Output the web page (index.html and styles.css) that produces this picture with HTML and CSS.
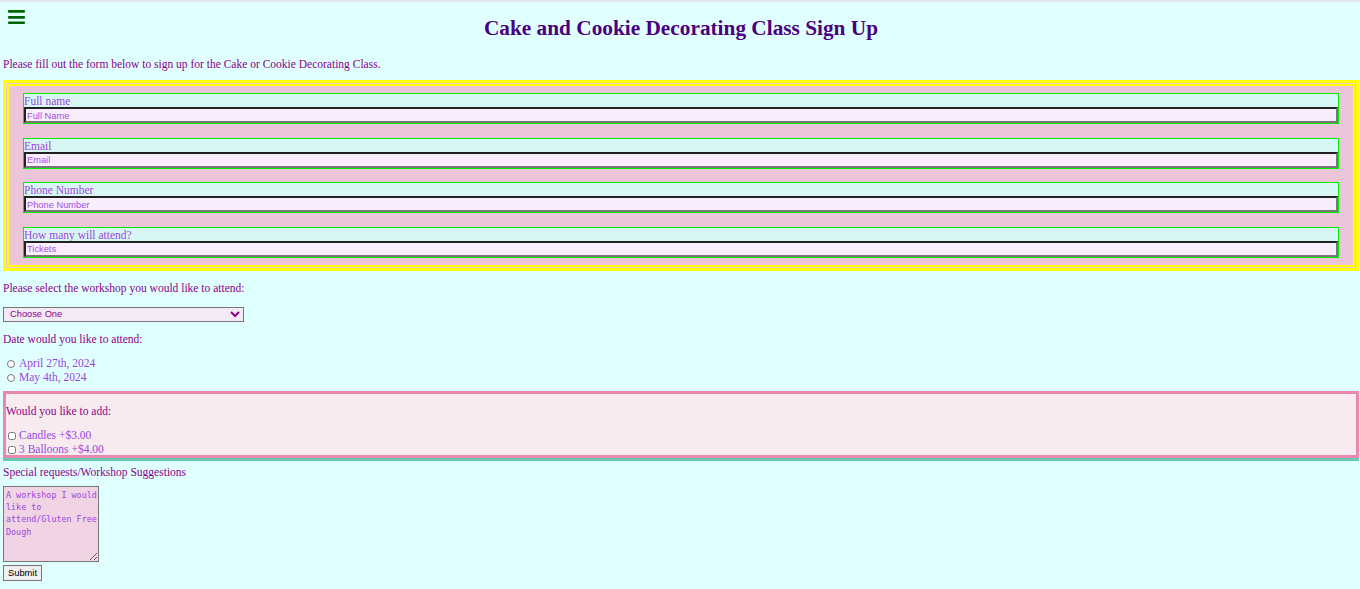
FILE: index.html
```html
<!DOCTYPE html>
<html lang="en">
<head>
<meta charset="utf-8">
<title>Cake and Cookie Decorating Class Sign Up</title>
<link rel="stylesheet" href="styles.css">
</head>
<body>
<header class="top">
  <div class="menu" aria-label="Menu">
    <svg width="17" height="15" viewBox="0 0 17 15">
      <rect x="0" y="0" width="17" height="2.7" rx="1" fill="#006400"/>
      <rect x="0" y="6" width="17" height="2.7" rx="1" fill="#006400"/>
      <rect x="0" y="11.4" width="17" height="2.7" rx="1" fill="#006400"/>
    </svg>
  </div>
  <h1 class="title">Cake and Cookie Decorating Class Sign Up</h1>
  <div></div>
</header>

<p class="intro">Please fill out the form below to sign up for the Cake or Cookie Decorating Class.</p>

<form class="form">
  <fieldset class="contact">
    <div class="group">
      <label class="group-label" for="name">Full name</label>
      <input class="field" id="name" type="text" placeholder="Full Name">
    </div>
    <div class="group">
      <label class="group-label" for="email">Email</label>
      <input class="field" id="email" type="email" placeholder="Email">
    </div>
    <div class="group">
      <label class="group-label" for="phone">Phone Number</label>
      <input class="field" id="phone" type="tel" placeholder="Phone Number">
    </div>
    <div class="group">
      <label class="group-label" for="tickets">How many will attend?</label>
      <input class="field" id="tickets" type="text" placeholder="Tickets">
    </div>
  </fieldset>

  <p class="text select-label">Please select the workshop you would like to attend:</p>
  <select class="workshop">
    <option>Choose One</option>
    <option>Cake Decorating</option>
    <option>Cookie Decorating</option>
  </select>

  <p class="text date-label">Date would you like to attend:</p>
  <div class="options">
    <label class="option"><input class="radio" type="radio" name="date"> April 27th, 2024</label>
    <label class="option"><input class="radio" type="radio" name="date"> May 4th, 2024</label>
  </div>

  <div class="addons">
    <p class="text addons-label">Would you like to add:</p>
    <label class="option check-row"><input class="check" type="checkbox">Candles +$3.00</label>
    <label class="option check-row"><input class="check" type="checkbox">3 Balloons +$4.00</label>
  </div>

  <p class="text special-label">Special requests/Workshop Suggestions</p>
  <textarea class="requests" placeholder="A workshop I would like to attend/Gluten Free Dough"></textarea>
  <div class="actions"><button class="submit" type="submit">Submit</button></div>
</form>
</body>
</html>
```

FILE: styles.css
```css
html, body {
  margin: 0;
  padding: 0;
}

body {
  background: #e0ffff;
  border-top: 2px solid #e2e6ea;
  padding: 0 1px 0 3px;
  font-family: "Liberation Serif", "Times New Roman", serif;
  font-size: 11.5px;
  line-height: 13px;
  color: #8b008b;
}

.top {
  display: grid;
  grid-template-columns: 1fr auto 1fr;
  align-items: start;
  padding-top: 8px;
  height: 33px;
}

.menu {
  padding-left: 5px;
  height: 15px;
}

.menu svg {
  display: block;
}

.title {
  margin: 5px 0 0;
  font-size: 21.3px;
  line-height: 26px;
  font-weight: bold;
  color: #4b0082;
  text-align: center;
}

.intro {
  margin: 14px 0 0;
  padding-top: 1px;
  line-height: 13px;
}

.form {
  margin: 0;
}

.contact {
  margin: 9px 0 0;
  padding: 10px 17px 10px 17px;
  border: 3px solid #ffff00;
  box-shadow: inset 0 0 0 1px #edc5d8, inset 0 0 0 3px #ffff00;
  background: #edc5d8;
  display: flex;
  flex-direction: column;
  gap: 13.6px;
  min-width: 0;
}

.group {
  display: flex;
  flex-direction: column;
  border: 1px solid #00ee00;
  background: #d8f7f4;
}

.group-label {
  color: #9b45e0;
  padding-top: 1px;
  line-height: 12px;
}

.field {
  margin: 0;
  height: 16px;
  box-sizing: border-box;
  padding: 1px 1px 0;
  border-style: solid;
  border-width: 2px;
  border-color: #222 #777 #777 #222;
  background: #f9eefb;
  font-family: "Liberation Sans", Arial, sans-serif;
  font-size: 9.3px;
  color: #9b45e0;
}

.field::placeholder {
  color: #a24fe6;
}

.text {
  margin: 0;
  padding-top: 1px;
  line-height: 13px;
}

.select-label {
  margin-top: 10px;
}

.workshop {
  display: block;
  margin: 12px 0 0;
  width: 241px;
  height: 15px;
  padding: 0 0 0 2px;
  border: 1px solid #767676;
  border-radius: 0;
  background: #f3eaf5;
  color: #8b008b;
  font-family: "Liberation Sans", Arial, sans-serif;
  font-size: 9.3px;
}

.date-label {
  margin-top: 10px;
}

.options {
  margin-top: 11px;
  display: flex;
  flex-direction: column;
}

.option {
  display: flex;
  align-items: center;
  height: 14px;
  color: #9b45e0;
}

.radio {
  width: 8px;
  height: 8px;
  margin: 0 4px 0 4px;
}

.addons {
  margin-top: 6px;
  border: 3px solid #e888ae;
  background: #f7ebf0;
  box-shadow: 0 3px 0 #6cc7b5;
  padding: 9px 0 0 0;
  height: 52px;
  box-sizing: content-box;
}

.addons-label {
  margin-bottom: 11px;
  padding-top: 2px;
}

.check {
  width: 8px;
  height: 8px;
  margin: 0 3px 0 2px;
}

.special-label {
  margin-top: 7px;
}

.requests {
  display: block;
  margin: 7px 0 0;
  width: 96px;
  height: 76px;
  box-sizing: border-box;
  padding: 2px 1px 2px 2px;
  border: 1px solid #767676;
  background: #f0d4e4;
  font-family: "DejaVu Sans Mono", monospace;
  font-size: 8.4px;
  line-height: 12.3px;
  color: #9b45e6;
  resize: both;
}

.requests::placeholder {
  color: #9b45e6;
}

.actions {
  margin-top: 3px;
}

.submit {
  height: 16px;
  width: 39px;
  padding: 0;
  border: 1px solid #767676;
  border-radius: 0;
  background: #efefef;
  font-family: "Liberation Sans", Arial, sans-serif;
  font-size: 9.3px;
  color: #000;
}
```
